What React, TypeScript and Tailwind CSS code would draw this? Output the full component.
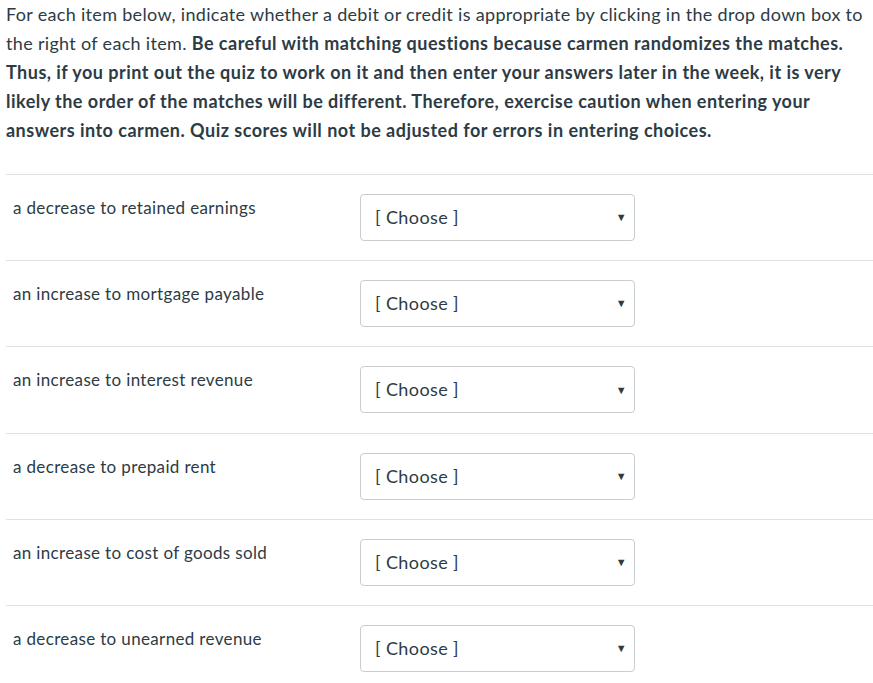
const items = [
  'a decrease to retained earnings',
  'an increase to mortgage payable',
  'an increase to interest revenue',
  'a decrease to prepaid rent',
  'an increase to cost of goods sold',
  'a decrease to unearned revenue',
];

const ChooseBox = () => (
  <div className="w-[275px] h-[47px] border border-[#c7cdd1] rounded-[4px] bg-white flex items-center justify-between pl-[14px] pr-[7px] text-[18px] tracking-[0.4px] text-[#2d3b45]">
    <span>[ Choose ]</span>
    <span className="text-[11px] text-[#2d3b45]">▼</span>
  </div>
);

export default function App() {
  return (
    <div className="min-h-screen bg-white text-[#2d3b45] font-['Lato',sans-serif] pl-[6px]">
      <p className="text-[18px] leading-[29px] tracking-[0.32px] whitespace-nowrap">
        For each item below, indicate whether a debit or credit is appropriate by clicking in the drop down box to
        <br />
        the right of each item.{' '}
        <strong className="font-bold tracking-[0.48px]">
          Be careful with matching questions because carmen randomizes the matches.
          <br />
          Thus, if you print out the quiz to work on it and then enter your answers later in the week, it is very
          <br />
          likely the order of the matches will be different. Therefore, exercise caution when entering your
          <br />
          answers into carmen. Quiz scores will not be adjusted for errors in entering choices.
        </strong>
      </p>
      <div className="mt-[29px]">
        {items.map((label) => (
          <div key={label} className="flex border-t border-[#dfe2e4] h-[86.2px] pl-[7px] pt-[19px]">
            <div className="w-[347px] pt-[4px] text-[17px] leading-[20px] tracking-[0.35px]">{label}</div>
            <ChooseBox />
          </div>
        ))}
      </div>
    </div>
  );
}
